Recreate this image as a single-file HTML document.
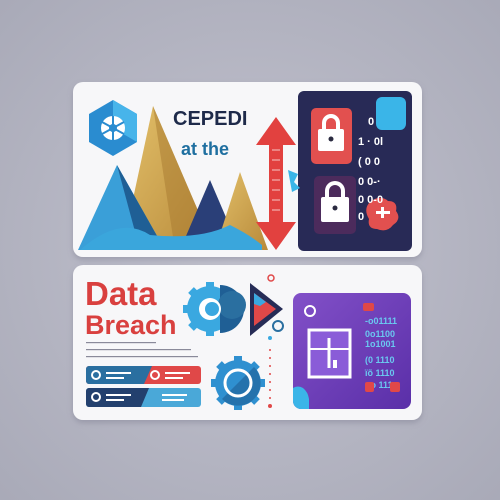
<!DOCTYPE html>
<html><head><meta charset="utf-8"><style>
html,body{margin:0;padding:0;width:500px;height:500px;overflow:hidden;background:#b3b3c1}
svg{display:block}
text{font-family:"Liberation Sans",Arial,sans-serif;font-weight:bold}
</style></head><body>
<svg width="500" height="500" viewBox="0 0 500 500" xmlns="http://www.w3.org/2000/svg">
<defs>
<radialGradient id="bg" cx="50%" cy="50%" r="70%"><stop offset="0" stop-color="#c3c3cf"/><stop offset="1" stop-color="#a9aab8"/></radialGradient>
<linearGradient id="gold" x1="0" y1="0" x2="1" y2="1"><stop offset="0" stop-color="#e3c06a"/><stop offset="1" stop-color="#b88a3a"/></linearGradient>
<linearGradient id="pur" x1="0" y1="0" x2="1" y2="1"><stop offset="0" stop-color="#8250c8"/><stop offset="1" stop-color="#5a2fa8"/></linearGradient>
<filter id="sh" x="-10%" y="-10%" width="120%" height="130%"><feDropShadow dx="0" dy="3" stdDeviation="3" flood-color="#6a6a80" flood-opacity="0.35"/></filter>
</defs>
<rect width="500" height="500" fill="url(#bg)"/>
<rect x="73" y="82" width="349" height="175" rx="10" fill="#f7f7f9" filter="url(#sh)"/>
<polygon points="153,106 122,250 215,250" fill="url(#gold)"/>
<polygon points="153,106 175,250 215,250" fill="#a87a30" opacity="0.5"/>
<polygon points="117,165 78,250 165,250" fill="#3a9fd8"/>
<polygon points="117,165 140,250 165,250 " fill="#1f5f95"/>
<polygon points="210,180 180,250 240,250" fill="#2a3f78"/>
<polygon points="240,172 215,250 268,250" fill="url(#gold)"/>
<path d="M80,250 Q120,215 150,235 Q200,240 230,225 Q250,235 262,245 L262,250 Z" fill="#3aa6dc"/>
<polygon points="113,100 137,114 137,142 113,156 89,142 89,114" fill="#2a8cd0"/>
<polygon points="113,100 137,114 137,142 113,128" fill="#47b4ea"/>
<circle cx="113" cy="128" r="12" fill="#fff"/>
<circle cx="113" cy="128" r="4" fill="#2a8cd0"/>
<g stroke="#2a8cd0" stroke-width="2"><line x1="113" y1="116" x2="113" y2="140"/><line x1="102" y1="122" x2="124" y2="134"/><line x1="102" y1="134" x2="124" y2="122"/></g>
<text x="173" y="125" font-size="20" fill="#1e2a4a">CEPEDI</text>
<text x="181" y="155" font-size="18" fill="#1f6fa0">at the</text>
<polygon points="276,117 296,145 283,145 283,222 296,222 276,250 256,222 269,222 269,145 256,145" fill="#e2413f"/>
<g stroke="#fff" stroke-width="1" opacity="0.7"><line x1="272" y1="150" x2="280" y2="150"/><line x1="272" y1="160" x2="280" y2="160"/><line x1="272" y1="170" x2="280" y2="170"/><line x1="272" y1="180" x2="280" y2="180"/><line x1="272" y1="190" x2="280" y2="190"/><line x1="272" y1="200" x2="280" y2="200"/><line x1="272" y1="210" x2="280" y2="210"/></g>
<rect x="298" y="91" width="114" height="160" rx="6" fill="#282a56"/>
<rect x="376" y="97" width="30" height="33" rx="6" fill="#3ab5e8"/>
<rect x="311" y="108" width="41" height="56" rx="5" fill="#e2504f"/>
<rect x="314" y="176" width="42" height="58" rx="5" fill="#4c2b5c"/>
<g fill="#fff"><path d="M322,129 v-6 a9,9 0 0 1 18,0 v6 h-4 v-6 a5,5 0 0 0 -10,0 v6z"/><rect x="318" y="129" width="26" height="22" rx="2"/>
<path d="M325,197 v-6 a10,10 0 0 1 20,0 v6 h-4 v-6 a6,6 0 0 0 -12,0 v6z"/><rect x="321" y="197" width="28" height="25" rx="2"/></g>
<circle cx="331" cy="139" r="2.5" fill="#2a2a40"/><circle cx="335" cy="208" r="2.5" fill="#2a2a40"/>
<path d="M370,202 q10,-8 18,-1 q10,0 8,10 q6,8 -3,14 q-6,8 -16,4 q-10,0 -8,-10 q-6,-10 1,-17z" fill="#e2504f"/>
<rect x="376" y="211" width="14" height="3" fill="#fff"/><rect x="381" y="207" width="3" height="11" fill="#fff"/>
<g font-size="11" fill="#fff"><text x="368" y="125">0</text><text x="358" y="145">1 · 0l</text><text x="358" y="165">( 0 0</text><text x="358" y="185">0 0-·</text><text x="358" y="203">0 0-0</text><text x="358" y="220">0</text></g>
<path d="M288,170 l10,4 l-4,8 l6,6 l-8,4z" fill="#3ab5e8"/>
<rect x="73" y="265" width="349" height="155" rx="10" fill="#f7f7f9" filter="url(#sh)"/>
<text x="85" y="305" font-size="33" fill="#d9403f">Data</text>
<text x="85" y="334" font-size="27" fill="#d9403f">Breach</text>
<g fill="#8a8a9a"><rect x="86" y="342" width="70" height="1.2"/><rect x="86" y="349" width="105" height="1.2"/><rect x="86" y="356" width="112" height="1.2"/></g>
<rect x="86" y="366" width="115" height="18" rx="3" fill="#e04848"/>
<path d="M89,366 h63 l-8,18 h-55 a3,3 0 0 1 -3,-3 v-12 a3,3 0 0 1 3,-3z" fill="#2a6fa0"/>
<rect x="86" y="388" width="115" height="19" rx="3" fill="#4aa8d8"/>
<path d="M89,388 h60 l-8,19 h-52 a3,3 0 0 1 -3,-3 v-13 a3,3 0 0 1 3,-3z" fill="#23406e"/>
<g fill="none" stroke="#fff" stroke-width="2"><circle cx="96" cy="375" r="4"/><circle cx="155" cy="375" r="4"/><circle cx="96" cy="397" r="4"/></g>
<g fill="#fff"><rect x="106" y="372" width="25" height="2"/><rect x="106" y="377" width="18" height="2"/><rect x="165" y="372" width="25" height="2"/><rect x="165" y="377" width="18" height="2"/><rect x="106" y="394" width="25" height="2"/><rect x="106" y="399" width="18" height="2"/><rect x="162" y="394" width="25" height="2"/><rect x="162" y="399" width="22" height="2"/></g>
<g fill="#3aa8e0"><circle cx="210" cy="309" r="23"/>
<g stroke="#3aa8e0" stroke-width="8"><line x1="210" y1="282" x2="210" y2="336"/><line x1="183" y1="309" x2="237" y2="309"/><line x1="191" y1="290" x2="229" y2="328"/><line x1="191" y1="328" x2="229" y2="290"/></g></g>
<path d="M220,285 A24,24 0 0 1 220,333 Z" fill="#1f5f95"/>
<circle cx="232" cy="305" r="14" fill="#2a6fa0"/>
<circle cx="210" cy="309" r="11" fill="#fff"/><circle cx="212" cy="309" r="7" fill="#3aa8e0"/>
<g fill="#2f90d0"><circle cx="238" cy="383" r="23"/>
<g stroke="#2f90d0" stroke-width="8"><line x1="238" y1="356" x2="238" y2="410"/><line x1="211" y1="383" x2="265" y2="383"/><line x1="219" y1="364" x2="257" y2="402"/><line x1="219" y1="402" x2="257" y2="364"/></g></g>
<path d="M222,399 A22,22 0 0 0 254,367 Z" fill="#1f5f95" opacity="0.6"/>
<circle cx="238" cy="383" r="13" fill="none" stroke="#fff" stroke-width="3"/>
<polygon points="250,283 283,309 250,336" fill="#262c56"/>
<polygon points="254,293 276,309 254,326" fill="#e04848"/>
<path d="M254,293 l12,9 l-6,4 l-6,-2z" fill="#3aa8e0"/>
<circle cx="278" cy="326" r="5" fill="none" stroke="#2a6fa0" stroke-width="2"/>
<circle cx="271" cy="278" r="3" fill="none" stroke="#e04848" stroke-width="1.5"/>
<circle cx="270" cy="338" r="2" fill="#3aa8e0"/>
<g fill="#e04848"><circle cx="270" cy="350" r="1"/><circle cx="270" cy="358" r="1"/><circle cx="270" cy="366" r="1"/><circle cx="270" cy="374" r="1"/><circle cx="270" cy="382" r="1"/><circle cx="270" cy="390" r="1"/><circle cx="270" cy="398" r="1"/><circle cx="270" cy="406" r="2"/></g>
<rect x="293" y="293" width="118" height="116" rx="8" fill="url(#pur)"/>
<path d="M293,398 v-10 a10,10 0 0 1 10,0 q5,4 6,11 v10 h-8 a8,8 0 0 1 -8,-8z" fill="#3ab5e8"/>
<circle cx="310" cy="311" r="5" fill="none" stroke="#fff" stroke-width="2"/>
<rect x="309" y="330" width="41" height="47" fill="#8a5cd8" stroke="#fff" stroke-width="3"/>
<line x1="309" y1="349" x2="350" y2="349" stroke="#fff" stroke-width="2"/><line x1="329" y1="338" x2="329" y2="368" stroke="#fff" stroke-width="3"/>
<rect x="333" y="360" width="4" height="8" fill="#fff"/>
<rect x="363" y="303" width="11" height="8" rx="2" fill="#e04848"/>
<g font-size="9" fill="#6ac8f0" font-family="Liberation Mono"><text x="365" y="324">-o01111</text><text x="365" y="337">0o1100</text><text x="365" y="347">1o1001</text><text x="365" y="363">(0 1110</text><text x="365" y="376">ïõ 1110</text><text x="365" y="388">oo 111</text></g>
<rect x="365" y="382" width="9" height="10" rx="2" fill="#e04848"/><rect x="390" y="382" width="10" height="10" rx="2" fill="#e04848"/>
</svg>
</body></html>
